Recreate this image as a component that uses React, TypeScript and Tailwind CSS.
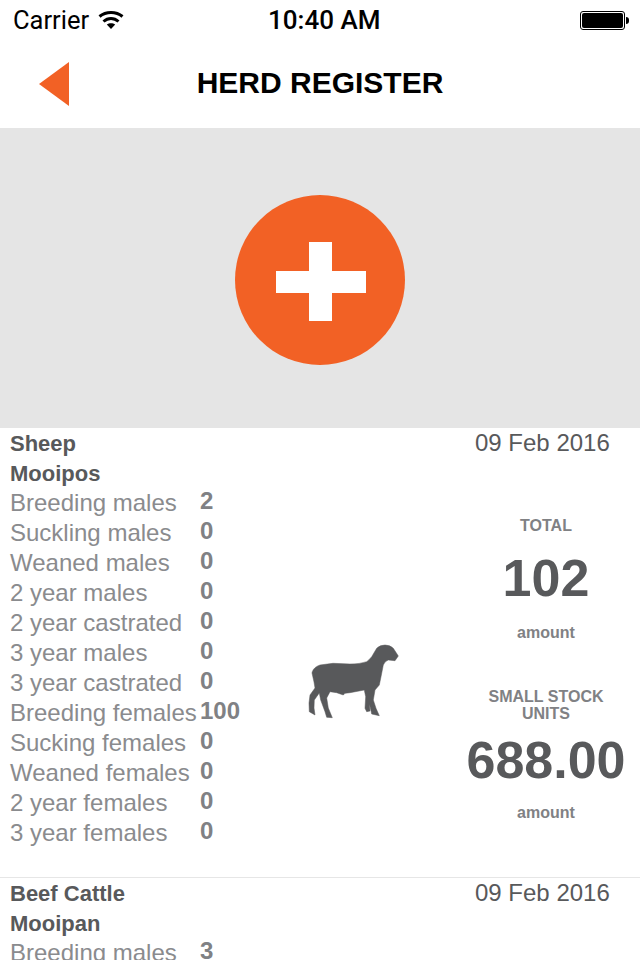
import React from 'react';

type Count = { label: string; value: string };

const sheepCounts: Count[] = [
  { label: 'Breeding males', value: '2' },
  { label: 'Suckling males', value: '0' },
  { label: 'Weaned males', value: '0' },
  { label: '2 year males', value: '0' },
  { label: '2 year castrated', value: '0' },
  { label: '3 year males', value: '0' },
  { label: '3 year castrated', value: '0' },
  { label: 'Breeding females', value: '100' },
  { label: 'Sucking females', value: '0' },
  { label: 'Weaned females', value: '0' },
  { label: '2 year females', value: '0' },
  { label: '3 year females', value: '0' },
];

const CountRow = ({ label, value }: Count) => (
  <div className="flex h-[30px] items-center">
    <span className="w-[190px] shrink-0 whitespace-nowrap text-[24px] text-[#8a8b8e]">{label}</span>
    <span className="-translate-y-[2px] text-[24px] font-bold leading-none text-[#808184]">{value}</span>
  </div>
);

const HerdColumn = ({ kind, breed, counts }: { kind: string; breed: string; counts: Count[] }) => (
  <div className="w-[280px] shrink-0 pl-[10px]">
    <div className="text-[22px] font-bold text-[#58595b]">
      <div className="flex h-[30px] items-center pt-[1px]">{kind}</div>
      <div className="flex h-[30px] items-center pt-[1px]">{breed}</div>
    </div>
    {counts.map((c) => (
      <CountRow key={c.label} {...c} />
    ))}
  </div>
);

const DateLabel = ({ date }: { date: string }) => (
  <div className="flex h-[30px] items-center whitespace-nowrap pl-[21px] text-[24px] text-[#58595b]">{date}</div>
);

const Wifi = () => (
  <svg width="26" height="20" viewBox="0 0 26 20" fill="none" stroke="#000" strokeWidth="3">
    <path d="M1.5 6.5C8 1 18 1 24.5 6.5" />
    <path d="M5.5 11.5C10 7.5 16 7.5 20.5 11.5" />
    <path d="M13 19L8.8 14.6C11.2 12.8 14.8 12.8 17.2 14.6Z" fill="#000" stroke="none" />
  </svg>
);

const Battery = () => (
  <div className="flex items-center">
    <div className="h-[19px] w-[45px] rounded-[3px] border border-black p-[1px]">
      <div className="h-full w-full rounded-[2px] bg-black" />
    </div>
    <div className="ml-[1px] h-[7px] w-[3px] rounded-r-sm bg-black" />
  </div>
);

// silhouette plotted in the page's own coordinates, hence the offset viewBox
const Sheep = () => (
  <svg width="120" height="100" viewBox="290 630 120 100" fill="#58595b" stroke="#58595b" strokeWidth="0.5" strokeLinejoin="round">
    <path d="M312.3 671.7Q314 667 320 665L333 663.3L350 664Q360 664 366.7 661.7Q369 660 371.7 656.7L376.7 648.3Q380 645 385 645Q390 645 393.3 648.3L398.3 656L395 660.7L388.3 660Q385 661 383.3 665L381 676.7L379.3 685L375 690L373.3 700L376 708.3L379.3 715.7L371.7 714L369.5 704L370 711L366.7 711.7L365 708.3L365.7 696.7L364.3 690L350 692.7L345 693.3L343.3 695L336.7 692.7L330 691.7L326.7 698L328.3 708L332.3 717.7L326.7 717.3L325 711.7L320.7 700L319.3 693L314.3 700L314 708L315 715L309.3 711.7L309 703L310 695L315 688L314 682L312 673Z" />
  </svg>
);

export default function App() {
  return (
    <div className="h-[960px] w-[640px] overflow-hidden bg-white font-['Liberation_Sans',sans-serif]">
      {/* status bar */}
      <div className="relative flex h-[40px] items-center justify-between pl-[13px] pr-[11px] text-black">
        <div className="flex items-center gap-[9px]">
          <span className="font-['Roboto',sans-serif] text-[25.5px]">Carrier</span>
          <Wifi />
        </div>
        <span className="absolute left-[268px] font-['Roboto',sans-serif] text-[26px] font-medium">10:40 AM</span>
        <Battery />
      </div>

      {/* nav bar */}
      <div className="relative flex h-[88px] items-center justify-center">
        <svg className="absolute left-[39px] top-[22px]" width="30" height="44" viewBox="0 0 30 44">
          <path d="M30 0V44L0 22Z" fill="#f26125" />
        </svg>
        <h1 className="-translate-y-[2px] text-[30px] font-bold text-black">HERD REGISTER</h1>
      </div>

      {/* add herd panel */}
      <div className="flex h-[300px] items-center justify-center bg-[#e5e5e5] pt-[4px]">
        <button className="relative h-[170px] w-[170px] rounded-full bg-[#f26125]">
          <span className="absolute left-[41px] top-[76px] h-[22px] w-[90px] bg-white" />
          <span className="absolute left-[74px] top-[47px] h-[79px] w-[23px] bg-white" />
        </button>
      </div>

      {/* sheep entry */}
      <div className="flex h-[450px] border-b border-[#e6e6e6]">
        <HerdColumn kind="Sheep" breed="Mooipos" counts={sheepCounts} />
        <div className="w-[174px] shrink-0 pl-[10px] pt-[202px]">
          <Sheep />
        </div>
        <div className="flex-1">
          <DateLabel date="09 Feb 2016" />
          <div className="flex flex-col items-center pr-[2px] text-[#808184]">
            <div className="mt-[59px] h-[18px] text-[16px] font-bold leading-[18px]">TOTAL</div>
            <div className="mt-[13px] h-[60px] text-[52px] font-bold leading-[60px] text-[#58595b]">102</div>
            <div className="mt-[16px] h-[18px] text-[16px] font-bold leading-[18px]">amount</div>
            <div className="mt-[46px] text-center text-[16px] font-bold leading-[17px]">
              SMALL STOCK
              <br />
              UNITS
            </div>
            <div className="mt-[8px] h-[60px] text-[52px] font-bold leading-[60px] text-[#58595b]">688.00</div>
            <div className="mt-[14px] h-[18px] text-[16px] font-bold leading-[18px]">amount</div>
          </div>
        </div>
      </div>

      {/* beef cattle entry */}
      <div className="flex">
        <HerdColumn kind="Beef Cattle" breed="Mooipan" counts={[{ label: 'Breeding males', value: '3' }]} />
        <div className="ml-[174px] flex-1">
          <DateLabel date="09 Feb 2016" />
        </div>
      </div>
    </div>
  );
}
